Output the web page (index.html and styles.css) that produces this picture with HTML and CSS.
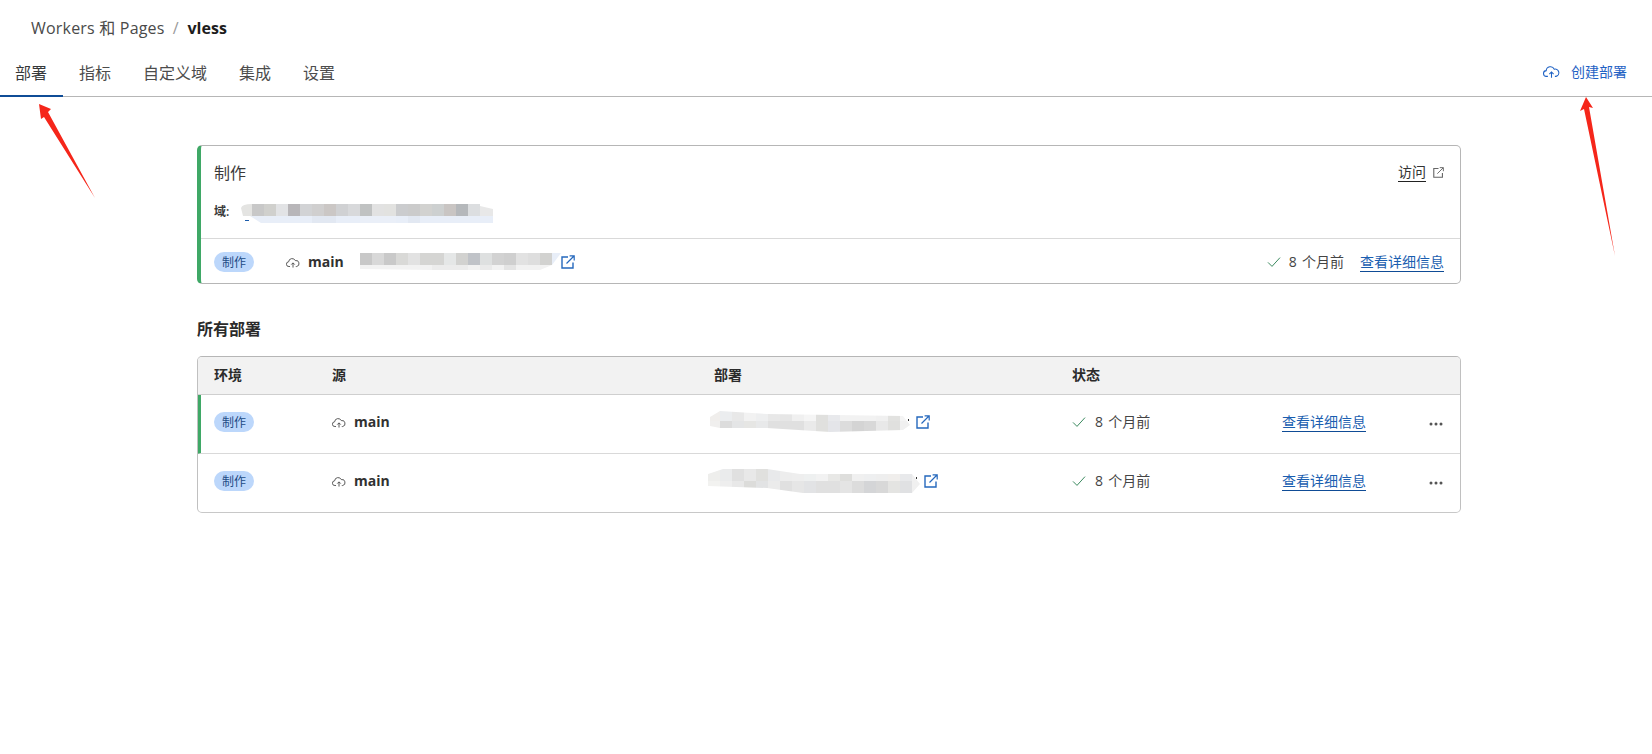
FILE: index.html
```html
<!DOCTYPE html>
<html lang="zh-CN">
<head>
<meta charset="utf-8">
<title>vless</title>
<link rel="stylesheet" href="styles.css">
</head>
<body>
<svg width="0" height="0" class="defs">
  <defs>
    <symbol id="cloud" viewBox="0 0 16 12">
      <path d="M4.6 10.6H3.4A2.7 2.7 0 0 1 3 5.2 4 4 0 0 1 10.6 3.8 3.4 3.4 0 0 1 12.2 10.6H11.2" fill="none" stroke="currentColor" stroke-width="1"/>
      <path d="M8 11.8V6.6M6 8.4 8 6.4 10 8.4" fill="none" stroke="currentColor" stroke-width="1"/>
    </symbol>
    <symbol id="ext" viewBox="0 0 14 14">
      <path d="M7 2H1V13H12V7.5" fill="none" stroke="currentColor" stroke-width="1.4"/>
      <path d="M5.5 8.5 13 1M8.6 .8H13.2V5.4" fill="none" stroke="currentColor" stroke-width="1.2"/>
    </symbol>
    <symbol id="check" viewBox="0 0 14 12">
      <path d="M1 6.4 5 10.4 13 1.6" fill="none" stroke="currentColor" stroke-width="1"/>
    </symbol>
    <symbol id="dots" viewBox="0 0 14 4">
      <circle cx="2" cy="2" r="1.5" fill="currentColor"/><circle cx="7" cy="2" r="1.5" fill="currentColor"/><circle cx="12" cy="2" r="1.5" fill="currentColor"/>
    </symbol>
    <clipPath id="clip-a"><polygon points="0,6 10,0 57,3 193,5 200,14 193,19 120,21 57,17 10,17 0,15"/></clipPath>
    <clipPath id="clip-b"><polygon points="0,5 15,0 59,0 92,5 204,5 212,15 204,24 95,24 59,19 0,17"/></clipPath>
  </defs>
</svg>

<header class="page-head">
  <nav class="crumbs"><span class="crumb">Workers 和 Pages</span><span class="crumb-sep">/</span><strong class="crumb-current">vless</strong></nav>
  <div class="tabbar">
    <a class="tab tab-active">部署</a>
    <a class="tab">指标</a>
    <a class="tab">自定义域</a>
    <a class="tab">集成</a>
    <a class="tab">设置</a>
    <a class="create"><svg class="icon-cloud-lg"><use href="#cloud"/></svg><span>创建部署</span></a>
  </div>
</header>

<main class="content">
  <section class="card">
    <div class="card-top">
      <div class="card-title-row">
        <span class="card-title">制作</span>
        <a class="visit"><span class="visit-text">访问</span><svg class="icon-ext-gray"><use href="#ext"/></svg></a>
      </div>
      <div class="domain-row">
        <span class="domain-label">域:</span>
        <svg class="blur blur-domain" viewBox="0 0 252 20">
          <path fill="#e8eef8" d="M9 12H252V19H20Z"/>
          <rect x="4" y="16" width="4" height="1" fill="#1c5cab"/>
          <g>
            <path fill="#e4e4e2" d="M0 4Q1 0 11 0V12H2Z"/>
            <rect x="11" width="12" height="12" fill="#c8c8c8"/><rect x="23" width="12" height="12" fill="#d0d0cd"/><rect x="35" width="12" height="12" fill="#e2e3e5"/><rect x="47" width="12" height="12" fill="#b8b6b9"/><rect x="59" width="12" height="12" fill="#d2d3d5"/><rect x="71" width="12" height="12" fill="#d0cfcf"/><rect x="83" width="12" height="12" fill="#cbc7c5"/><rect x="95" width="12" height="12" fill="#d0d1d3"/><rect x="107" width="12" height="12" fill="#d8d9db"/><rect x="119" width="12" height="12" fill="#c0c2c2"/><rect x="131" width="12" height="12" fill="#e2e2e2"/><rect x="143" width="12" height="12" fill="#e2e2e0"/><rect x="155" width="12" height="12" fill="#cbccce"/><rect x="167" width="12" height="12" fill="#cbcbcb"/><rect x="179" width="12" height="12" fill="#d2d2d0"/><rect x="191" width="12" height="12" fill="#cdd0d0"/><rect x="203" width="12" height="12" fill="#c9c5c3"/><rect x="215" width="12" height="12" fill="#b5b8bb"/><rect x="227" width="12" height="12" fill="#dcdee0"/>
            <path fill="#e8e8e8" d="M239 2 252 5V12H239Z"/>
            <rect x="119" y="12" width="36" height="7" fill="#eaeff8"/><rect x="71" y="12" width="24" height="7" fill="#e2e8f2"/><rect x="167" y="12" width="12" height="7" fill="#e2e8f2"/>
          </g>
        </svg>
      </div>
    </div>
    <div class="card-bottom">
      <span class="pill">制作</span>
      <svg class="icon-cloud card-cloud"><use href="#cloud"/></svg>
      <strong class="branch">main</strong>
      <svg class="blur blur-commit" viewBox="0 0 201 18">
        <path fill="#e8eef8" d="M180 0H201L192 12H180Z"/>
        <rect width="12" height="12" fill="#c8c8c8"/><rect x="12" width="12" height="12" fill="#d8d8d8"/><rect x="24" width="12" height="12" fill="#c9c9c9"/><rect x="36" width="12" height="12" fill="#d9d9d7"/><rect x="48" width="12" height="12" fill="#e2e2e2"/><rect x="60" width="24" height="12" fill="#d5d5d3"/><rect x="84" width="12" height="12" fill="#e5e7e7"/><rect x="96" width="12" height="12" fill="#d2d2d0"/><rect x="108" width="12" height="12" fill="#c0c3c8"/><rect x="120" width="12" height="12" fill="#dee0e0"/><rect x="132" width="12" height="12" fill="#d2d2d2"/><rect x="144" width="12" height="12" fill="#cfcfcf"/><rect x="156" width="12" height="12" fill="#e2e2e2"/><rect x="168" width="12" height="12" fill="#dedede"/><rect x="180" width="12" height="12" fill="#d2d2d0"/>
        <path fill="#f2f2f2" d="M0 12H192L180 17H72L0 16Z"/>
        <rect x="72" y="12" width="36" height="5" fill="#ececec"/><rect x="120" y="12" width="12" height="5" fill="#eaeaea"/><rect x="144" y="12" width="12" height="5" fill="#e4e4e4"/>
      </svg>
      <svg class="icon-ext"><use href="#ext"/></svg>
      <span class="spacer"></span>
      <svg class="icon-check"><use href="#check"/></svg>
      <span class="age age-card">8 个月前</span>
      <a class="details details-card">查看详细信息</a>
    </div>
  </section>

  <h2 class="section-title">所有部署</h2>

  <section class="table">
    <div class="row row-head">
      <span>环境</span><span>源</span><span>部署</span><span>状态</span>
    </div>
    <div class="row row-current">
      <span class="cell"><span class="pill">制作</span></span>
      <span class="cell"><svg class="icon-cloud"><use href="#cloud"/></svg><strong class="branch">main</strong></span>
      <span class="cell">
        <svg class="blur blur-row-a" viewBox="0 0 201 22">
          <g clip-path="url(#clip-a)">
            <rect width="10" height="10" fill="#f0eeec"/><rect y="10" width="10" height="12" fill="#f0efee"/>
            <rect x="10" width="12" height="10" fill="#ebedef"/><rect x="22" width="12" height="10" fill="#e8e8e8"/><rect x="34" width="12" height="10" fill="#f2f2f2"/><rect x="46" width="12" height="10" fill="#eeeff0"/><rect x="58" width="12" height="10" fill="#e8e8e8"/><rect x="70" width="12" height="10" fill="#e6e6e6"/><rect x="82" width="12" height="10" fill="#f0f0f0"/><rect x="94" width="12" height="10" fill="#f5f5f5"/><rect x="106" width="12" height="10" fill="#e0e0de"/><rect x="118" width="12" height="10" fill="#e8e9ec"/><rect x="130" width="12" height="10" fill="#f2f2f2"/><rect x="142" width="12" height="10" fill="#f2f2f2"/><rect x="154" width="12" height="10" fill="#f2f2f2"/><rect x="166" width="12" height="10" fill="#f0f0f0"/><rect x="178" width="12" height="10" fill="#e2e2e0"/><rect x="190" width="12" height="10" fill="#f4f4f4"/>
            <rect x="10" y="10" width="12" height="12" fill="#dcdcdc"/><rect x="22" y="10" width="12" height="12" fill="#e4e5e6"/><rect x="34" y="10" width="12" height="12" fill="#e6e6e4"/><rect x="46" y="10" width="12" height="12" fill="#e8e9ea"/><rect x="58" y="10" width="12" height="12" fill="#e0e0e0"/><rect x="70" y="10" width="12" height="12" fill="#e0e0e0"/><rect x="82" y="10" width="12" height="12" fill="#e0e0e0"/><rect x="94" y="10" width="12" height="12" fill="#eaeaea"/><rect x="106" y="10" width="12" height="12" fill="#e0e0de"/><rect x="118" y="10" width="12" height="12" fill="#e4e5e9"/><rect x="130" y="10" width="12" height="12" fill="#dcdcdc"/><rect x="142" y="10" width="12" height="12" fill="#d4d4d4"/><rect x="154" y="10" width="12" height="12" fill="#d8d8d8"/><rect x="166" y="10" width="12" height="12" fill="#e8e8e8"/><rect x="178" y="10" width="12" height="12" fill="#e0e0de"/><rect x="190" y="10" width="12" height="12" fill="#f0f0f0"/>
          </g>
          <rect x="198" y="8" width="1" height="2" fill="#333"/>
        </svg>
        <svg class="icon-ext"><use href="#ext"/></svg>
      </span>
      <span class="cell"><svg class="icon-check"><use href="#check"/></svg><span class="age">8 个月前</span></span>
      <a class="details">查看详细信息</a>
      <svg class="icon-dots"><use href="#dots"/></svg>
    </div>
    <div class="row">
      <span class="cell"><span class="pill">制作</span></span>
      <span class="cell"><svg class="icon-cloud"><use href="#cloud"/></svg><strong class="branch">main</strong></span>
      <span class="cell">
        <svg class="blur blur-row-b" viewBox="0 0 212 24">
          <g clip-path="url(#clip-b)">
            <rect width="12" height="12" fill="#eeeeec"/><rect x="12" width="12" height="12" fill="#eaebec"/><rect x="24" width="12" height="12" fill="#e0e0e0"/><rect x="36" width="12" height="12" fill="#e8e8e8"/><rect x="48" width="12" height="12" fill="#e0e0de"/><rect x="60" width="12" height="12" fill="#e8e9eb"/><rect x="72" width="12" height="12" fill="#ededed"/><rect x="84" width="12" height="12" fill="#eeeeee"/><rect x="96" width="12" height="12" fill="#eef0f0"/><rect x="108" width="12" height="12" fill="#f2f2f2"/><rect x="120" width="12" height="12" fill="#e8e8e6"/><rect x="132" width="12" height="12" fill="#dededc"/><rect x="144" width="12" height="12" fill="#f0f0f0"/><rect x="156" width="12" height="12" fill="#eeeff0"/><rect x="168" width="12" height="12" fill="#eeeeee"/><rect x="180" width="12" height="12" fill="#f0eeec"/><rect x="192" width="12" height="12" fill="#e8e9eb"/><rect x="204" width="8" height="12" fill="#f0f0f0"/>
            <rect y="12" width="12" height="12" fill="#f2f2f0"/><rect x="12" y="12" width="12" height="12" fill="#eeeeee"/><rect x="24" y="12" width="12" height="12" fill="#e8e8e8"/><rect x="36" y="12" width="12" height="12" fill="#dcdcda"/><rect x="48" y="12" width="12" height="12" fill="#e2e3e4"/><rect x="60" y="12" width="12" height="12" fill="#ebebeb"/><rect x="72" y="12" width="12" height="12" fill="#e0e0e0"/><rect x="84" y="12" width="12" height="12" fill="#e6e6e6"/><rect x="96" y="12" width="12" height="12" fill="#e2e3e5"/><rect x="108" y="12" width="24" height="12" fill="#e0e0e0"/><rect x="132" y="12" width="12" height="12" fill="#e4e4e4"/><rect x="144" y="12" width="12" height="12" fill="#dcdcdc"/><rect x="156" y="12" width="12" height="12" fill="#d4d5d7"/><rect x="168" y="12" width="12" height="12" fill="#d8d8d8"/><rect x="180" y="12" width="12" height="12" fill="#e4e4e2"/><rect x="192" y="12" width="12" height="12" fill="#e0e1e3"/><rect x="204" y="12" width="8" height="12" fill="#f0f0f0"/>
          </g>
          <rect x="208" y="8" width="1" height="2" fill="#333"/>
        </svg>
        <svg class="icon-ext icon-ext-b"><use href="#ext"/></svg>
      </span>
      <span class="cell"><svg class="icon-check"><use href="#check"/></svg><span class="age">8 个月前</span></span>
      <a class="details">查看详细信息</a>
      <svg class="icon-dots"><use href="#dots"/></svg>
    </div>
  </section>
</main>

<svg class="arrow arrow-left" viewBox="0 0 60 96"><path fill="#f5261a" d="M1 1 13 6 10 9 57 95 6 14 3 16Z"/></svg>
<svg class="arrow arrow-right" viewBox="0 0 40 160"><path fill="#f5261a" d="M6 0 13 11 9 10 35 159 4 12 0 14Z"/></svg>
</body>
</html>
```
FILE: styles.css
```css
* { box-sizing: border-box; }
html, body { margin: 0; padding: 0; }
body {
  position: relative;
  min-height: 754px;
  background: #fff;
  color: #313131;
  font-family: "Open Sans", "Noto Sans CJK SC", sans-serif;
  font-size: 14px;
  overflow: hidden;
}
.defs { position: absolute; }
svg { display: block; flex: none; }

.crumbs {
  display: flex;
  align-items: center;
  height: 55px;
  padding-left: 31px;
  font-size: 16px;
  line-height: 22px;
}
.crumb { color: #4a4a4a; letter-spacing: .2px; }
.crumb-sep { margin: 0 9px 0 8px; color: #9a9a9a; }
.crumb-current { color: #1d1d1d; font-weight: 700; }

.tabbar {
  display: flex;
  align-items: center;
  height: 42px;
  border-bottom: 1px solid #b6b6b6;
}
.tab {
  display: flex;
  align-items: center;
  height: 42px;
  margin-bottom: -1px;
  padding: 0 16px 6px;
  color: #4c4c4c;
  font-size: 16px;
  border-bottom: 2px solid transparent;
}
.tab-active { padding-left: 15px; color: #36393a; border-bottom-color: #0f4c96; }
.create {
  display: flex;
  align-items: center;
  gap: 11px;
  margin-left: auto;
  padding: 0 25px 8px 0;
  color: #1f62c4;
  font-size: 14px;
  line-height: 20px;
}
.icon-cloud-lg { width: 17px; height: 13px; }

.content { padding: 48px 191px 0 197px; }

.card {
  height: 139px;
  border: 1px solid #b6b6b6;
  border-left: 4px solid #3fa866;
  border-radius: 5px;
}
.card-top { height: 93px; padding: 12px 16px 0 13px; border-bottom: 1px solid #d9d9d9; }
.card-title-row { display: flex; align-items: center; justify-content: space-between; height: 28px; }
.card-title { font-size: 16px; color: #3a3a3a; }
.visit { display: flex; align-items: center; gap: 7px; }
.visit-text { color: #333; line-height: 19px; border-bottom: 1px solid #222; }
.icon-ext-gray { width: 11px; height: 11px; color: #666; }
.domain-row { display: flex; align-items: center; height: 20px; margin-top: 15px; font-size: 12px; font-weight: 600; }
.domain-label { width: 27px; color: #3a3a3a; }
.blur-domain { width: 252px; height: 20px; margin-top: 6px; }

.card-bottom { display: flex; align-items: center; height: 44px; padding: 2px 16px 0 13px; }
.pill {
  display: flex;
  align-items: center;
  justify-content: center;
  width: 40px;
  height: 20px;
  border-radius: 10px;
  background: #bcd7fb;
  color: #1c4b85;
  font-size: 12px;
}
.icon-cloud { width: 14px; height: 11px; color: #444; }
.card-cloud { margin-left: 32px; }
.branch { margin-left: 8px; color: #313131; font-size: 14px; font-weight: 700; line-height: 18px; }
.blur { display: block; }
.blur-commit { width: 201px; height: 18px; margin-left: 16px; }
.icon-ext { width: 14px; height: 14px; margin-left: 0; color: #2568bd; }
.spacer { flex: 1; }
.icon-check { width: 14px; height: 12px; color: #3b8a5f; }
.age { margin-left: 9px; color: #444; line-height: 18px; word-spacing: 1.5px; }
.age-card { margin-left: 8px; }
.details {
  color: #1a5eb0;
  line-height: 18px;
  border-bottom: 1px solid #0f4c96;
  justify-self: start;
}
.details-card { margin-left: 16px; }

.section-title { margin: 34px 0 16px; color: #2b2b2b; font-size: 16px; font-weight: 700; line-height: 22px; }

.table { height: 157px; border: 1px solid #b6b6b6; border-color: #b6b6b6 #c0c0c0 #c8c8c8; border-radius: 5px; overflow: hidden; }
.row {
  display: grid;
  grid-template-columns: 118px 382px 358px 210px 147px 14px;
  align-items: center;
  height: 59px;
  padding: 16px 0 23px 16px;
  border-bottom: 1px solid #d9d9d9;
}
.row:last-child { height: 58px; padding: 15px 0 24px 16px; border-bottom: 0; }
.row-head {
  height: 38px;
  padding: 0 0 3px 16px;
  background: #f2f2f2;
  border-bottom-color: #cfcfcf;
  font-size: 14px;
  font-weight: 700;
  color: #2b2b2b;
}
.row-current { margin-left: -1px; padding-left: 13px; border-left: 4px solid #3fa866; }
.cell { display: flex; align-items: center; }
.row .branch { margin-left: 8px; }
.blur-row-a { width: 201px; height: 22px; margin-left: -4px; }
.blur-row-a + .icon-ext { margin-left: 5px; }
.blur-row-b { width: 212px; height: 24px; margin-left: -6px; }
.icon-ext-b { margin-left: 4px; }
.icon-dots { width: 14px; height: 4px; margin-top: 4px; color: #555; }

.arrow { position: absolute; }
.arrow-left { left: 38px; top: 103px; width: 60px; height: 96px; }
.arrow-right { left: 1580px; top: 97px; width: 40px; height: 160px; }
```
